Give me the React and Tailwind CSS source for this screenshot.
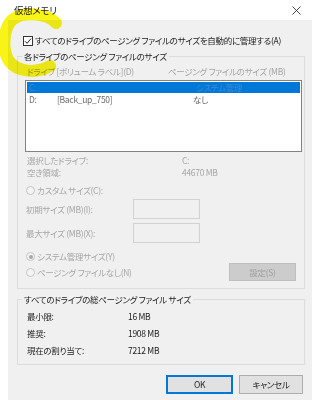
import React from "react";

const jp = "font-['Noto_Sans_CJK_JP',sans-serif] [font-feature-settings:'palt']";

const Radio = ({ checked }) => (
  <span className="w-[9px] h-[9px] shrink-0 rounded-full border border-[#c4c4c4] bg-[#f4f4f4] flex items-center justify-center">
    {checked && <span className="w-[4px] h-[4px] rounded-full bg-[#a6a6a6]" />}
  </span>
);

const Row = ({ label, value, labelW, className = "" }) => (
  <div className={"flex h-[11px] items-center " + className}>
    <span className={labelW}>{label}</span>
    <span>{value}</span>
  </div>
);

export default function App() {
  return (
    <div className={"relative w-[312px] h-[400px] bg-white flex flex-col overflow-hidden whitespace-nowrap text-[8.5px] tracking-[-0.3px] leading-[11px] text-[#1c1c1c] " + jp}>
      {/* title bar */}
      <div className="h-[20px] shrink-0 flex items-center justify-between pl-[14px] pr-[11px]">
        <span className="text-[9.5px] text-[#222]">仮想メモリ</span>
        <svg width="9" height="9" viewBox="0 0 9 9">
          <path d="M0.5 0.5 L8.5 8.5 M8.5 0.5 L0.5 8.5" stroke="#333" strokeWidth="0.9" />
        </svg>
      </div>

      {/* body */}
      <div className="flex-1 ml-[8px] bg-[#f0f0f0] flex flex-col">
        <div className="mt-[15px] ml-[15px] h-[11px] flex items-center gap-[2px]">
          <span className="w-[10px] h-[10px] shrink-0 border border-[#333] bg-white flex items-center justify-center">
            <svg width="8" height="8" viewBox="0 0 8 8">
              <path d="M1 4.2 L3.1 6.3 L7 1.6" fill="none" stroke="#222" strokeWidth="1" />
            </svg>
          </span>
          <span>すべてのドライブのページング ファイルのサイズを自動的に管理する(A)</span>
        </div>

        <fieldset className="mt-[5px] ml-[9px] w-[288px] border border-[#dcdcdc] pb-[7px]">
          <legend className="ml-[4px] px-[2px] leading-[11px]">各ドライブのページング ファイルのサイズ</legend>
          <div className="mt-[4px] pl-[9px] h-[11px] flex items-center text-[#a3a3a3]">
            <span className="w-[141px]">ドライブ [ボリューム ラベル](D)</span>
            <span>ページング ファイルのサイズ (MB)</span>
          </div>

          <div className="mt-[3px] ml-[7px] w-[277px] h-[72px] border border-[#838383] bg-white">
            <div className="mt-[1px] mx-[1px] h-[11px] bg-[#0078d7] flex items-center text-[#3f8bd3]">
              <span className="pl-[2px] w-[169px]">C:</span>
              <span>システム管理</span>
            </div>
            <div className="h-[12px] flex items-center text-[#6a6a6a]">
              <span className="pl-[3px] w-[31px]">D:</span>
              <span className="w-[136px]">[Back_up_750]</span>
              <span>なし</span>
            </div>
          </div>

          <div className="pl-[9px] text-[#a6a6a6]">
            <Row className="mt-[3px]" labelW="w-[155px]" label="選択したドライブ:" value="C:" />
            <Row className="mt-[1px]" labelW="w-[155px]" label="空き領域:" value="44670 MB" />
          </div>

          <div className="pl-[8px] text-[#a6a6a6]">
            <div className="mt-[7px] h-[11px] flex items-center gap-[2px]">
              <Radio />
              <span>カスタム サイズ(C):</span>
            </div>
            <div className="mt-[3px] h-[20px] flex items-center">
              <span className="w-[107px]">初期サイズ (MB)(I):</span>
              <span className="w-[67px] h-[20px] border border-[#d2d2d2] bg-[#f0f0f0]" />
            </div>
            <div className="mt-[4px] h-[20px] flex items-center">
              <span className="w-[107px]">最大サイズ (MB)(X):</span>
              <span className="w-[67px] h-[20px] border border-[#d2d2d2] bg-[#f0f0f0]" />
            </div>
            <div className="mt-[8px] h-[11px] flex items-center gap-[2px]">
              <Radio checked />
              <span>システム管理サイズ(Y)</span>
            </div>
            <div className="mt-[1px] h-[18px] flex items-center justify-between pr-[8px]">
              <div className="flex items-center gap-[2px]">
                <Radio />
                <span>ページング ファイルなし(N)</span>
              </div>
              <button className="w-[67px] h-[18px] bg-[#cccccc] border border-[#bfbfbf] text-[#a0a0a0] text-[8.5px]">
                設定(S)
              </button>
            </div>
          </div>
        </fieldset>

        <fieldset className="mt-[5px] ml-[9px] w-[288px] border border-[#dcdcdc] pb-[8px]">
          <legend className="ml-[4px] px-[2px] leading-[11px]">すべてのドライブの総ページング ファイル サイズ</legend>
          <div className="pl-[9px]">
            <Row className="mt-[6px]" labelW="w-[101px]" label="最小限:" value="16 MB" />
            <Row className="mt-[6px]" labelW="w-[101px]" label="推奨:" value="1908 MB" />
            <Row className="mt-[6px]" labelW="w-[101px]" label="現在の割り当て:" value="7212 MB" />
          </div>
        </fieldset>

        <div className="mt-[10px] pr-[9px] flex justify-end gap-[6px]">
          <button className="w-[67px] h-[19px] bg-[#e1e1e1] border-2 border-[#0078d7] text-[8.5px] text-[#1c1c1c]">OK</button>
          <button className="w-[64px] h-[19px] bg-[#e1e1e1] border border-[#adadad] text-[8.5px] text-[#1c1c1c]">キャンセル</button>
        </div>
      </div>

      {/* highlighter mark */}
      <svg className="absolute left-0 top-0 w-[80px] h-[85px] pointer-events-none mix-blend-multiply" viewBox="0 0 80 85">
        <path
          d="M56 23 C47 13 22 11 12 20 C3 29 2 50 9 61 C17 72 36 74 50 66"
          fill="none"
          stroke="#f8f418"
          strokeWidth="12"
          strokeLinecap="round"
        />
      </svg>
    </div>
  );
}
